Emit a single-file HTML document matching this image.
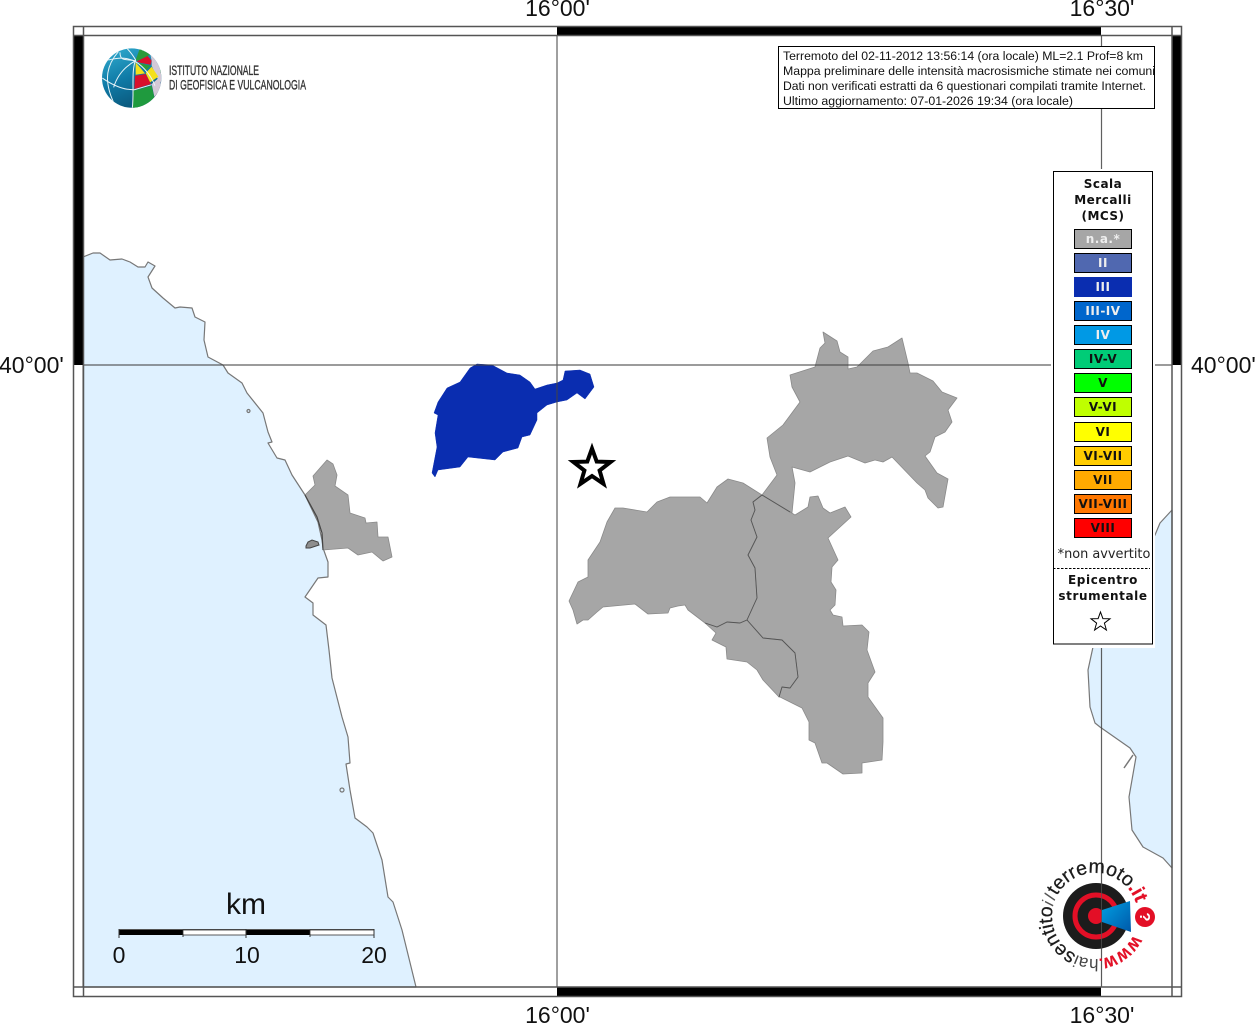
<!DOCTYPE html>
<html><head><meta charset="utf-8"><title>Mappa</title>
<style>html,body{margin:0;padding:0;background:#fff;overflow:hidden}svg{display:block}
text{font-family:"Liberation Sans",sans-serif}
.d text,text.d{font-family:"DejaVu Sans",sans-serif}
</style></head><body>
<svg xmlns="http://www.w3.org/2000/svg" width="1255" height="1024" viewBox="0 0 1255 1024">
<defs>
<linearGradient id="gb" x1="0.2" y1="0" x2="0.6" y2="1"><stop offset="0" stop-color="#2fa8cc"/><stop offset="0.5" stop-color="#0f7aa6"/><stop offset="1" stop-color="#0a5578"/></linearGradient>
<linearGradient id="cone" x1="0" y1="0" x2="1" y2="1"><stop offset="0" stop-color="#00a0e3"/><stop offset="1" stop-color="#0058a8"/></linearGradient>
<clipPath id="gc"><circle cx="110" cy="112" r="89"/></clipPath>
<clipPath id="tb"><rect x="778" y="46" width="377" height="63"/></clipPath>
</defs>
<rect width="1255" height="1024" fill="#fff"/>
<!-- sea -->
<g fill="#dff1ff" stroke="#777" stroke-width="1.200" stroke-linejoin="round">
<polygon points="83,257 93,253 100,253 110,260 122,259 130,262 138,267 145,267 148,262 155,266 148,277 152,288 163,298 175,308 180,307 192,308 195,317 205,322 204,340 208,357 223,365 228,373 242,383 247,393 263,413 268,432 272,442 268,443 277,458 285,460 292,475 305,495 318,522 322,540 323,548 328,562 328,577 318,578 305,597 313,603 313,615 326,625 329,650 332,678 342,717 348,737 350,763 346,764 350,790 355,818 367,827 373,833 382,860 388,897 393,902 402,930 416,987 83,987"/>
<polygon points="1172,510 1160,523 1155,535 1093,647 1088,670 1090,707 1095,723 1100,727 1130,748 1136,757 1129,797 1132,830 1143,847 1163,858 1172,868"/>
<path d="M1133,755 L1124,768" fill="none" stroke-width="1.500"/>
<circle cx="248.500" cy="411" r="1.500"/>
<circle cx="342" cy="790" r="2"/>
</g>
<!-- grey municipalities -->
<g fill="#a6a6a6" stroke="#8a8a8a" stroke-width="0.800" stroke-linejoin="round">
<polygon points="305,495 315,485 313,476 327,460 333,464 337,475 335,486 348,495 350,513 365,518 366,523 377,522 378,537 388,537 392,557 383,561 372,552 358,555 348,548 323,550 322,533 317,517"/>
<polygon points="823,332 837,341 840,352 848,357 848,369 857,367 873,351 888,347 902,338 908,363 910,373 917,373 933,381 942,392 957,398 948,410 952,422 945,432 935,437 930,452 925,456 937,473 948,479 943,507 938,508 928,498 925,490 917,483 892,457 883,462 875,460 865,463 848,456 830,462 810,472 792,467 795,483 792,513 762,495 777,475 770,457 767,438 783,425 800,402 792,387 790,375 815,367 820,348 825,343"/>
<polygon points="569,601 578,582 588,577 588,560 600,542 607,522 615,508 623,508 647,512 657,502 670,497 700,497 707,503 717,487 728,479 743,483 762,495 753,502 755,510 751,520 757,537 748,555 755,568 757,598 747,620 740,623 727,622 717,627 705,623 688,610 685,605 678,606 670,608 668,613 648,614 635,604 603,607 597,612 588,620 583,620 577,624 573,610"/>
<polygon points="762,495 790,512 795,515 808,507 810,497 818,496 823,508 830,513 845,507 851,517 828,538 838,560 832,567 831,582 836,590 835,605 830,610 833,615 842,617 843,626 862,625 869,632 867,650 875,672 868,683 868,697 883,718 883,742 882,760 862,763 862,773 843,774 827,763 822,763 815,743 809,740 809,722 802,708 780,697 779,697 782,687 790,688 798,677 795,653 782,640 763,638 747,620 757,598 755,568 748,555 757,537 751,520 755,510 753,502"/>
<polygon points="747,620 763,638 782,640 795,653 798,677 790,688 782,687 779,697 763,680 757,670 747,662 727,659 726,647 712,640 716,633 705,623 717,627 727,622 740,623"/>
</g>
<g fill="none" stroke="#555" stroke-width="0.900" stroke-linejoin="round">
<path d="M762,495 753,502 755,510 751,520 757,537 748,555 755,568 757,598 747,620 740,623 727,622 717,627 705,623"/>
<path d="M762,495 790,512"/>
<path d="M747,620 763,638 782,640 795,653 798,677 790,688 782,687 779,697"/>
<path d="M305,495 317,517 322,533 323,550" stroke="#444" stroke-width="1.200"/>
</g>
<polygon points="306,546 308,542 312,540 318,542 319,545 310,548 306,548" fill="#8d8d8d" stroke="#444"/>
<!-- blue -->
<polygon fill="#0a2db0" stroke="#0a2db0" stroke-width="0.500" stroke-linejoin="round" points="470,368 477,364 492,365 507,373 520,375 530,382 535,389 547,385 557,383 563,380 565,371 580,370 590,374 594,387 585,399 577,393 567,400 557,402 547,405 537,413 537,420 530,435 522,437 518,448 503,452 495,460 468,457 460,467 438,470 435,477 432,473 437,447 435,433 438,415 434,413 438,402 447,388 460,382"/>
<!-- grid -->
<g stroke="#444" stroke-width="1.200" opacity="0.850" fill="none">
<path d="M83,365H1172M557,36V987M1101.500,36V987"/>
</g>
<!-- frame -->
<g fill="#000">
<rect x="557" y="26" width="544" height="10"/>
<rect x="557" y="987" width="544" height="10"/>
<rect x="73" y="36" width="10" height="329"/>
<rect x="1172" y="36" width="10" height="329"/>
</g>
<g fill="none" stroke="#555" stroke-width="1.500">
<rect x="73.500" y="26.500" width="1108" height="970"/>
<path d="M73,35.500H1182M73,987H1182M83.500,26V997M1172,26V997"/>
</g>
<!-- tick labels -->
<g font-size="23" fill="#111">
<text x="557.500" y="16" text-anchor="middle">16°00'</text>
<text x="1102" y="16" text-anchor="middle">16°30'</text>
<text x="557.500" y="1023" text-anchor="middle">16°00'</text>
<text x="1102" y="1023" text-anchor="middle">16°30'</text>
<text x="-1" y="373">40°00'</text>
<text x="1191" y="373">40°00'</text>
</g>
<!-- big star -->
<polygon points="592,448.500 596.700,461.600 610.600,462 599.600,470.500 603.500,483.800 592,476 580.500,483.800 584.400,470.500 573.400,462 587.300,461.600" fill="#fff" stroke="#000" stroke-width="4"/>
<!-- info box -->
<rect x="778.500" y="46.500" width="376" height="62" fill="#fff" stroke="#000" stroke-width="1"/>
<g font-size="12.200" fill="#111" clip-path="url(#tb)">
<text x="783" y="60" textLength="360" lengthAdjust="spacingAndGlyphs">Terremoto del 02-11-2012 13:56:14 (ora locale) ML=2.1 Prof=8 km</text>
<text x="783" y="75" textLength="372" lengthAdjust="spacingAndGlyphs">Mappa preliminare delle intensità macrosismiche stimate nei comuni</text>
<text x="783" y="90" textLength="363" lengthAdjust="spacingAndGlyphs">Dati non verificati estratti da 6 questionari compilati tramite Internet.</text>
<text x="783" y="105" textLength="290" lengthAdjust="spacingAndGlyphs">Ultimo aggiornamento: 07-01-2026 19:34 (ora locale)</text>
</g>
<!-- legend -->
<rect x="1051" y="169" width="104" height="479" fill="#fff"/>
<rect x="1053.500" y="171.500" width="99" height="472.500" fill="#fff" stroke="#000" stroke-width="1"/>
<g class="d" font-size="12" font-weight="bold" text-anchor="middle" fill="#111" letter-spacing="0.500">
<text x="1103" y="188">Scala</text>
<text x="1103" y="204">Mercalli</text>
<text x="1103" y="220">(MCS)</text>
</g>
<g stroke="#000" stroke-width="1">
<rect x="1074.500" y="229.500" width="57" height="19" fill="#a6a6a6"/>
<rect x="1074.500" y="253.500" width="57" height="19" fill="#5068b0"/>
<rect x="1074.500" y="277.500" width="57" height="19" fill="#0a2db0" stroke="#0a2db0"/>
<rect x="1074.500" y="301.500" width="57" height="19" fill="#0066cc"/>
<rect x="1074.500" y="325.500" width="57" height="19" fill="#0099e5"/>
<rect x="1074.500" y="349.500" width="57" height="19" fill="#00cc77"/>
<rect x="1074.500" y="373.500" width="57" height="19" fill="#00ff00"/>
<rect x="1074.500" y="397.500" width="57" height="19" fill="#bfff00"/>
<rect x="1074.500" y="422.500" width="57" height="19" fill="#ffff00"/>
<rect x="1074.500" y="446.500" width="57" height="19" fill="#ffcc00"/>
<rect x="1074.500" y="470.500" width="57" height="19" fill="#ffaa00"/>
<rect x="1074.500" y="494.500" width="57" height="19" fill="#ff7700"/>
<rect x="1074.500" y="518.500" width="57" height="19" fill="#ff0000"/>
</g>
<g class="d" font-size="12" font-weight="bold" text-anchor="middle" letter-spacing="0.500">
<g fill="#eee">
<text x="1103" y="243">n.a.*</text>
<text x="1103" y="267">II</text>
<text x="1103" y="291">III</text>
<text x="1103" y="315">III-IV</text>
<text x="1103" y="339">IV</text>
</g>
<g fill="#111">
<text x="1103" y="363">IV-V</text>
<text x="1103" y="387">V</text>
<text x="1103" y="411">V-VI</text>
<text x="1103" y="436">VI</text>
<text x="1103" y="460">VI-VII</text>
<text x="1103" y="484">VII</text>
<text x="1103" y="508">VII-VIII</text>
<text x="1103" y="532">VIII</text>
</g>
</g>
<text class="d" x="1104" y="558" font-size="12.900" text-anchor="middle" fill="#222">*non avvertito</text>
<path d="M1053,568.500H1150" stroke="#000" stroke-width="1" stroke-dasharray="2.500 1.500"/>
<g class="d" font-size="12" font-weight="bold" text-anchor="middle" fill="#111" letter-spacing="0.600">
<text x="1103" y="584">Epicentro</text>
<text x="1103" y="600">strumentale</text>
</g>
<polygon points="1100.500,612 1102.900,618.600 1110,618.800 1104.400,623.100 1106.400,630 1100.500,626 1094.600,630 1096.600,623.100 1091,618.800 1098.100,618.600" fill="#fff" stroke="#000" stroke-width="1"/>
<!-- scale bar -->
<g>
<path d="M119,929.500H374" stroke="#555" stroke-width="1"/>
<rect x="119" y="930" width="64" height="5" fill="#000"/>
<rect x="183" y="930" width="63" height="5" fill="#fff" stroke="#333" stroke-width="0.800"/>
<rect x="246" y="930" width="64" height="5" fill="#000"/>
<rect x="310" y="930" width="64" height="5" fill="#fff" stroke="#333" stroke-width="0.800"/>
<path d="M119,929V938M183,934V937M246,929V938M310,934V937M374,929V938" stroke="#333" stroke-width="1"/>
<text x="246" y="914" font-size="30" text-anchor="middle" fill="#111">km</text>
<g font-size="23" fill="#111" text-anchor="middle">
<text x="119" y="963">0</text><text x="247" y="963">10</text><text x="374" y="963">20</text>
</g>
</g>
<!-- INGV logo -->
<g transform="translate(95 40.700) scale(0.33333)">
<circle cx="110" cy="112" r="89" fill="url(#gb)"/>
<g clip-path="url(#gc)">
<polygon points="122,58 135,22 168,40 155,48 128,60" fill="#2a9a3a"/>
<polygon points="125,62 158,46 170,60 167,72 135,66" fill="#d8102c"/>
<polygon points="165,36 200,60 204,105 195,130 170,75 170,60" fill="#d3c9d6"/>
<polygon points="122,65 150,98 122,102" fill="#f4e01a"/>
<polygon points="130,66 167,75 152,90" fill="#2a9a3a"/>
<polygon points="152,97 170,78 190,108 165,125" fill="#f4e01a"/>
<polygon points="120,105 152,100 168,130 118,145" fill="#d8102c"/>
<polygon points="115,150 170,135 178,170 155,205 112,205" fill="#1f9a3e"/>
<polygon points="170,130 193,110 200,140 178,168" fill="#d3c9d6"/>
<polygon points="178,170 192,150 182,180" fill="#d8102c"/>
<polygon points="195,88 204,92 200,106" fill="#2a9a3a"/>
<g fill="none" stroke="#e8f4f8" stroke-width="3">
<path d="M122,58C108,90 118,150 112,202"/>
<path d="M95,22C112,40 122,58 122,58"/>
<path d="M70,33C38,70 22,115 58,190"/>
<path d="M22,112C55,135 85,148 118,147L170,132"/>
<path d="M40,58C80,48 100,52 122,63C148,80 168,105 180,135"/>
<path d="M75,35C75,62 90,55 122,60"/>
<path d="M122,60C85,80 65,110 56,140"/>
</g>
</g>
</g>
<g font-size="14" fill="#333" stroke="#333" stroke-width="0.350">
<text x="169" y="75" textLength="90" lengthAdjust="spacingAndGlyphs">ISTITUTO NAZIONALE</text>
<text x="169" y="89.500" textLength="137" lengthAdjust="spacingAndGlyphs">DI GEOFISICA E VULCANOLOGIA</text>
</g>
<!-- hai sentito logo -->
<circle cx="1096" cy="916" r="33" fill="#1c1c1c"/>
<circle cx="1096" cy="916" r="21" fill="none" stroke="#e30f26" stroke-width="5"/>
<circle cx="1096" cy="916" r="8" fill="#e30f26"/>
<polygon points="1102,910 1130,901 1131,932 1102,922" fill="url(#cone)"/>
<path d="M1101.500,870V987" stroke="#555" stroke-width="1" opacity="0.700"/>
<circle cx="1145" cy="917" r="10" fill="#e30f26"/>
<text transform="translate(1145 917) rotate(90)" x="0" y="5" font-size="15" font-weight="bold" fill="#fff" text-anchor="middle">?</text>
<path id="arc" d="M1133.600,934.800 A43 43 0 1 1 1136.500,904.900" fill="none"/>
<text font-size="19.500" fill="#1c1c1c" stroke="#1c1c1c" stroke-width="0.250"><textPath href="#arc"><tspan fill="#e30f26" stroke="#e30f26" font-weight="bold" font-size="14.500">WWW.</tspan><tspan font-size="17" fill="#444" stroke="none">hai</tspan><tspan>sentito</tspan><tspan font-style="italic" fill="#555" stroke="none" font-size="17" letter-spacing="2">il</tspan><tspan>terremoto</tspan><tspan fill="#e30f26" stroke="#e30f26" font-weight="bold">.it</tspan></textPath></text>
</svg>
</body></html>
